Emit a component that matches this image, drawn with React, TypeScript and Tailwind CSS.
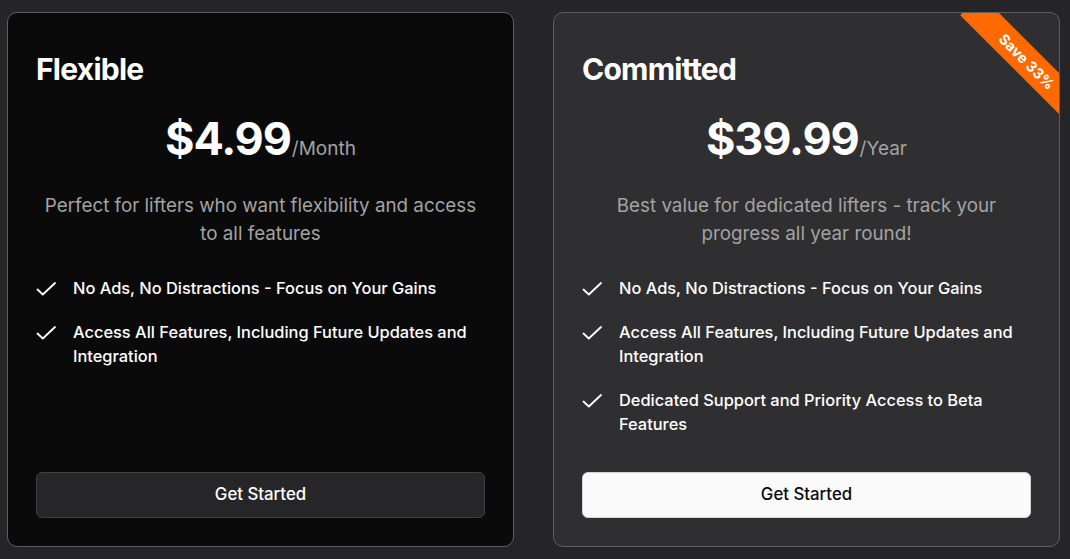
import React from 'react';

interface Plan {
  name: string;
  price: string;
  period: string;
  description: string;
  features: string[];
  highlighted?: boolean;
  badge?: string;
}

const plans: Plan[] = [
  {
    name: 'Flexible',
    price: '$4.99',
    period: '/Month',
    description: 'Perfect for lifters who want flexibility and access to all features',
    features: [
      'No Ads, No Distractions - Focus on Your Gains',
      'Access All Features, Including Future Updates and Integration',
    ],
  },
  {
    name: 'Committed',
    price: '$39.99',
    period: '/Year',
    description: 'Best value for dedicated lifters - track your progress all year round!',
    features: [
      'No Ads, No Distractions - Focus on Your Gains',
      'Access All Features, Including Future Updates and Integration',
      'Dedicated Support and Priority Access to Beta Features',
    ],
    highlighted: true,
    badge: 'Save 33%',
  },
];

function CheckIcon() {
  return (
    <svg className="w-5 h-5 shrink-0 mt-[3px]" viewBox="0 0 20 20" fill="none" stroke="currentColor">
      <path d="M1.5 10.5 L6.8 15.5 L19 4" strokeWidth={1.8} strokeLinecap="round" strokeLinejoin="round" />
    </svg>
  );
}

function PlanCard({ plan }: { plan: Plan }) {
  const cardBg = plan.highlighted ? 'bg-[#2f2f31]' : 'bg-[#0a0a0a]';
  const buttonClass = plan.highlighted
    ? 'bg-[#fafafa] text-[#0a0a0a] border-[#d4d4d4]'
    : 'bg-[#262628] text-white border-[#3f3f42]';

  return (
    <div
      className={`relative overflow-hidden w-[507px] h-[535px] shrink-0 rounded-[10px] border border-[#5e5e61] ${cardBg} px-7 pt-[38px] pb-7 flex flex-col`}
    >
      {plan.badge && (
        <div className="absolute right-[-48px] top-[34px] w-[160px] h-[29px] rotate-45 bg-[#ff6a00] text-white text-[14.5px] font-bold flex items-center justify-center">
          {plan.badge}
        </div>
      )}

      <h3 className="text-[30px] leading-9 font-bold tracking-tight text-white">{plan.name}</h3>

      <div className="mt-[29px] flex items-baseline justify-center">
        <span className="text-[45px] leading-none font-bold tracking-tight text-white">
          {plan.price}
        </span>
        <span className="ml-[1px] text-[19px] leading-none text-[#a3a3a3]">{plan.period}</span>
      </div>

      <p className="mt-[31px] text-[18.8px] leading-7 text-[#a3a3a3] text-center">
        {plan.description}
      </p>

      <ul className="mt-[28px] flex flex-col gap-5">
        {plan.features.map((f, i) => (
          <li key={i} className="flex items-start gap-[17px] text-white">
            <CheckIcon />
            <span className="text-[16.4px] leading-6 font-medium">{f}</span>
          </li>
        ))}
      </ul>

      <button
        className={`mt-auto h-[46px] w-full rounded-md border text-[16.8px] font-medium ${buttonClass}`}
      >
        Get Started
      </button>
    </div>
  );
}

export default function App() {
  return (
    <div
      className="w-[1070px] h-[559px] bg-[#252527] pl-[7px] pt-[12px] flex gap-[39px]"
      style={{ fontFamily: 'Inter, "Noto Sans", sans-serif' }}
    >
      {plans.map((p) => (
        <PlanCard key={p.name} plan={p} />
      ))}
    </div>
  );
}
